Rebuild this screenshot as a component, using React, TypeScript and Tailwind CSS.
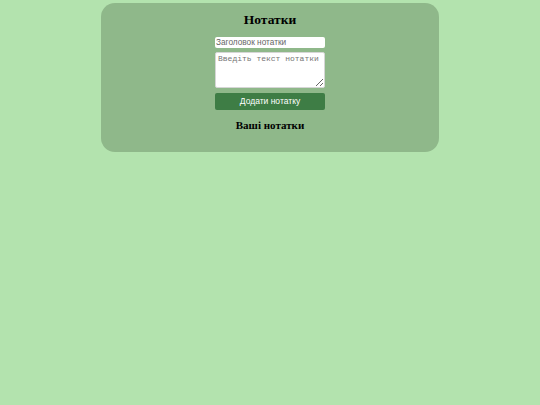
export default function App() {
  return (
    <div className="min-h-[405px] bg-[#b3e3ae] pt-[3px] font-['Liberation_Serif',serif]">
      <div className="mx-auto flex w-[338px] flex-col items-center rounded-[14px] bg-[#8fb88a] pt-[7px] pb-[20px]">
        <h1 className="text-[13.5px] leading-[20px] font-bold text-black">Нотатки</h1>
        <div className="mt-[7px] flex w-[110px] flex-col gap-[4px]">
          <input
            type="text"
            placeholder="Заголовок нотатки"
            className="h-[11px] w-full rounded-[2px] bg-white px-[1px] font-['Liberation_Sans',sans-serif] text-[8.25px] leading-[11px] text-black placeholder:text-[#666] outline-none"
          />
          <textarea
            placeholder="Введіть текст нотатки"
            className="h-[36px] w-full resize-y rounded-[2px] border border-[#d6d6d6] bg-white px-[2px] py-[1px] font-['Liberation_Mono',monospace] text-[8px] leading-[10px] placeholder:text-[#757575] outline-none"
          />
          <button className="mt-[1px] h-[17px] w-full rounded-[2px] bg-[#3e7d45] font-['Liberation_Sans',sans-serif] text-[8.5px] text-white">
            Додати нотатку
          </button>
        </div>
        <h2 className="mt-[8px] text-[11px] leading-[14px] font-bold text-black">Ваші нотатки</h2>
      </div>
    </div>
  );
}
